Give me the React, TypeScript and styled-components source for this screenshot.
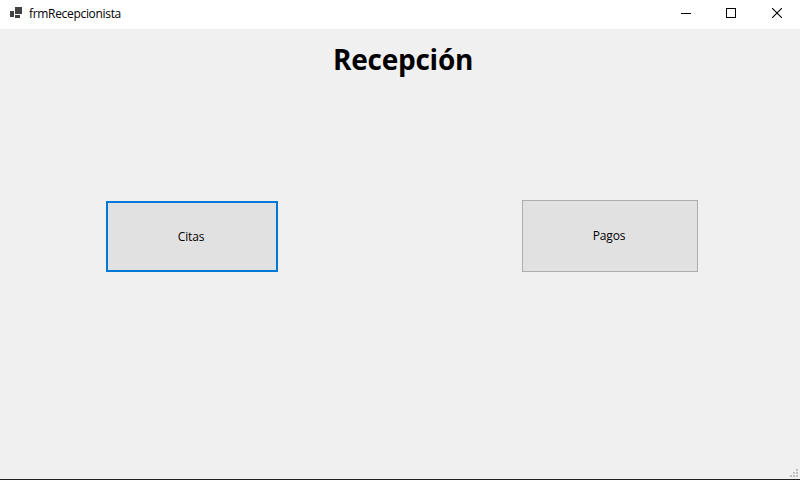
import React from "react";
import styled, { createGlobalStyle } from "styled-components";

const GlobalStyle = createGlobalStyle`
  * { box-sizing: border-box; }
  body { margin: 0; font-family: "Open Sans", "Noto Sans", sans-serif; color: #000; }
`;

const Window = styled.div`
  display: flex;
  flex-direction: column;
  width: 800px;
  height: 480px;
  background: #f0f0f0;
  border-bottom: 1px solid #231f20;
  overflow: hidden;
`;

const TitleBar = styled.header`
  display: flex;
  align-items: center;
  height: 29px;
  flex: none;
  padding-left: 10px;
  background: #fff;
`;

const AppIcon = styled.svg`
  display: block;
  margin: 0 7px 4px 0;
`;

const Caption = styled.span`
  flex: 1;
  font-size: 12px;
  line-height: 16px;
  letter-spacing: -0.32px;
  margin-bottom: 1px;
`;

const CaptionButton = styled.button`
  display: flex;
  justify-content: center;
  width: 46px;
  height: 29px;
  padding: 8px 0 0;
  border: 0;
  background: transparent;
`;

const Controls = styled.div`
  display: flex;
`;

const Form = styled.main`
  display: flex;
  flex-direction: column;
  flex: 1;
`;

const Heading = styled.h1`
  margin: 10px 0 0 333px;
  height: 40px;
  font-size: 28px;
  line-height: 40px;
  font-weight: 700;
  letter-spacing: -0.25px;
  white-space: nowrap;
`;

const Actions = styled.div`
  display: flex;
  justify-content: space-between;
  align-items: flex-end;
  height: 72px;
  margin: 121px 102px 0 106px;
`;

const ActionButton = styled.button<{ $focused?: boolean }>`
  width: ${(p) => (p.$focused ? 172 : 176)}px;
  height: ${(p) => (p.$focused ? 71 : 72)}px;
  padding: 0 2px 0 0;
  border: ${(p) => (p.$focused ? "2px solid #0078d7" : "1px solid #adadad")};
  background: #e1e1e1;
  color: #000;
  font-family: inherit;
  font-size: 12px;
  line-height: 16px;
  letter-spacing: -0.15px;
  outline: none;
`;

const Grip = styled.svg`
  display: block;
  margin: auto 2px 2px auto;
`;

export default function App() {
  return (
    <Window>
      <GlobalStyle />
      <TitleBar>
        <AppIcon width="12" height="11" fill="#424242" shapeRendering="crispEdges">
          <rect x="0" y="4" width="4" height="6" />
          <rect x="5" y="0" width="7" height="7" />
          <rect x="5" y="8" width="5" height="3" />
        </AppIcon>
        <Caption>frmRecepcionista</Caption>
        <Controls>
          <CaptionButton aria-label="Minimizar">
            <svg width="12" height="10" shapeRendering="crispEdges">
              <rect x="2" y="5" width="10" height="1" />
            </svg>
          </CaptionButton>
          <CaptionButton aria-label="Maximizar">
            <svg width="10" height="10" fill="none" stroke="#000">
              <rect x="0.5" y="0.5" width="9" height="9" />
            </svg>
          </CaptionButton>
          <CaptionButton aria-label="Cerrar">
            <svg width="10" height="10" fill="none" stroke="#000" strokeWidth="1.1">
              <path d="M0 0 10 10M10 0 0 10" />
            </svg>
          </CaptionButton>
        </Controls>
      </TitleBar>
      <Form>
        <Heading>Recepción</Heading>
        <Actions>
          <ActionButton $focused>Citas</ActionButton>
          <ActionButton>Pagos</ActionButton>
        </Actions>
        <Grip width="8" height="8" fill="#bfbfbf" shapeRendering="crispEdges">
          <rect x="6" y="0" width="2" height="2" />
          <rect x="3" y="3" width="2" height="2" />
          <rect x="6" y="3" width="2" height="2" />
          <rect x="0" y="6" width="2" height="2" />
          <rect x="3" y="6" width="2" height="2" />
          <rect x="6" y="6" width="2" height="2" />
        </Grip>
      </Form>
    </Window>
  );
}
